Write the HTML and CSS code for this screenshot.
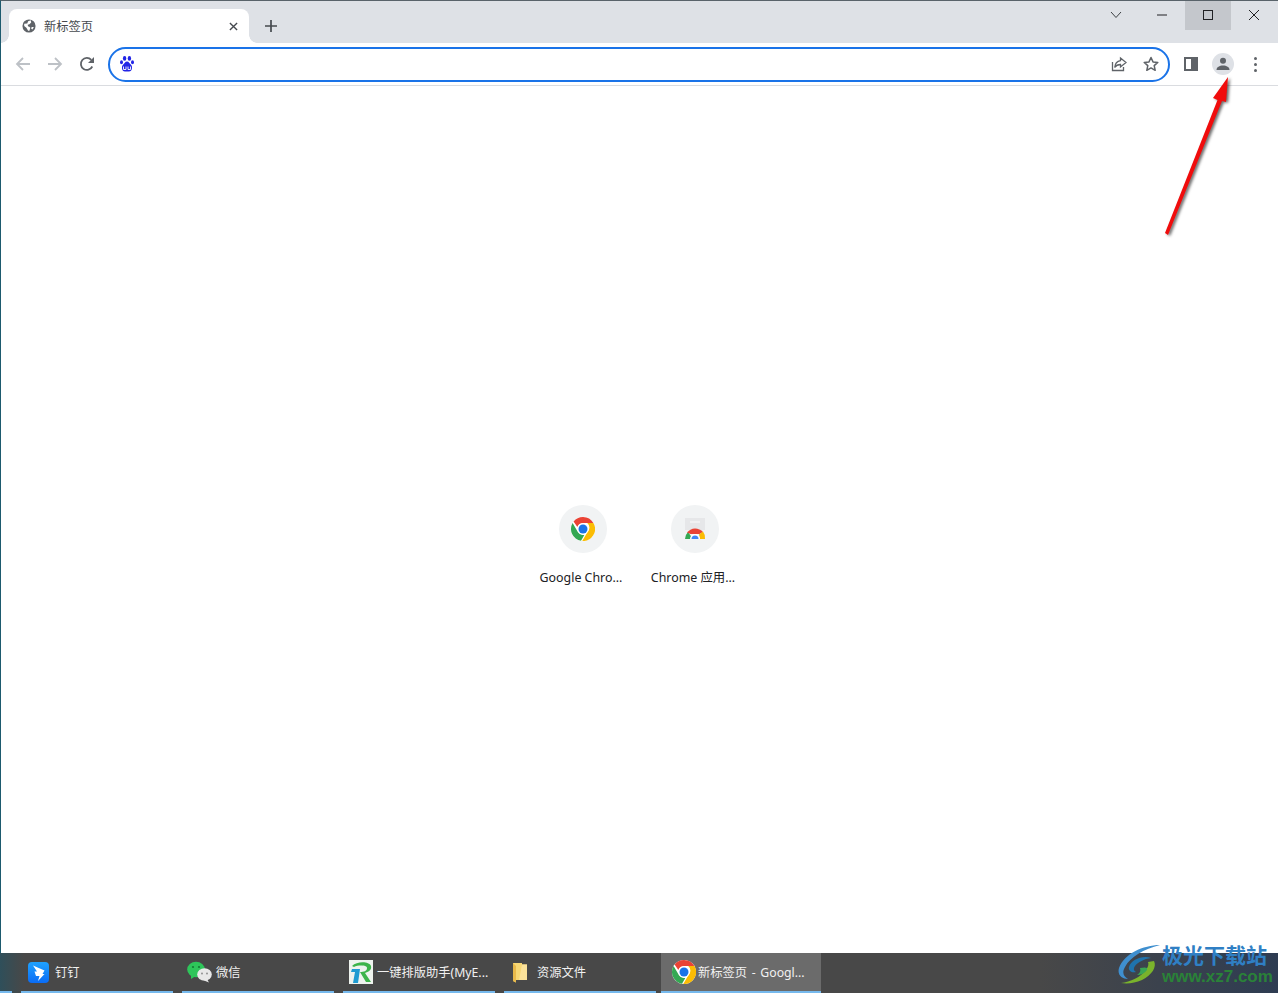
FILE: index.html
```html
<!DOCTYPE html>
<html lang="zh">
<head>
<meta charset="utf-8">
<title>新标签页</title>
<link rel="stylesheet" href="styles.css">
</head>
<body>
<svg width="0" height="0" class="defs">
  <defs>
    <symbol id="chrome" viewBox="0 0 48 48">
      <circle cx="24" cy="24" r="24" fill="#fff"/>
      <path d="M24 0a24 24 0 0 1 20.800 12H24a12 12 0 0 0-11.300 8L5.200 9A24 24 0 0 1 24 0z" fill="#ea4335"/>
      <path d="M3.200 12 14 30.500a12 12 0 0 0 12.600 5.400L20 47.700A24 24 0 0 1 3.200 12z" fill="#34a853"/>
      <path d="M44.800 12A24 24 0 0 1 22.500 48L33 30a12 12 0 0 0-.5-18z" fill="#fbbc04"/>
      <circle cx="24" cy="24" r="11.500" fill="#fff"/>
      <circle cx="24" cy="24" r="9" fill="#1a73e8"/>
    </symbol>
  </defs>
</svg>
<div class="window">
  <div class="tabstrip">
    <div class="tab">
      <svg class="tab-fav" viewBox="0 0 16 16"><circle cx="8" cy="8" r="7.500" fill="#5f6368"/><path d="M2.500 5.500 6 5l1-2.500 3-1 .5 2.500-2 2-2 .5.500 2H8l1.500 1.500-1 3.500H7L5 10 2.500 8z" fill="#fff"/><path d="M11 9h2.500l-1.500 3-1.500-1z" fill="#fff"/></svg>
      <span class="tab-title">新标签页</span>
      <svg class="tab-close" viewBox="0 0 10 10"><path d="M1 1l8 8M9 1l-8 8" stroke="#45494e" stroke-width="1.500"/></svg>
    </div>
    <svg class="newtab" viewBox="0 0 12 12"><path d="M6 0v12M0 6h12" stroke="#45494e" stroke-width="1.700"/></svg>
    <div class="caption">
      <button class="cap"><svg viewBox="0 0 12 8" width="12" height="8"><path d="M1 1l5 5.500L11 1" fill="none" stroke="#3c4043" stroke-width="1"/></svg></button>
      <button class="cap"><svg viewBox="0 0 10 10" width="10" height="10"><path d="M0 5h10" stroke="#202124" stroke-width="1"/></svg></button>
      <button class="cap cap-hover"><svg viewBox="0 0 10 10" width="10" height="10"><rect x=".5" y=".5" width="9" height="9" fill="none" stroke="#202124"/></svg></button>
      <button class="cap"><svg viewBox="0 0 10 10" width="10" height="10"><path d="M0 0l10 10M10 0L0 10" stroke="#202124" stroke-width="1"/></svg></button>
    </div>
  </div>
  <div class="toolbar">
    <svg class="nav" viewBox="0 0 16 16"><path d="M15 8H2M8 2 2 8l6 6" fill="none" stroke="#bdc1c6" stroke-width="1.800"/></svg>
    <svg class="nav" viewBox="0 0 16 16"><path d="M1 8h13M8 2l6 6-6 6" fill="none" stroke="#bdc1c6" stroke-width="1.800"/></svg>
    <svg class="nav" viewBox="0 0 16 16"><path d="M13.300 10.500A6 6 0 1 1 12.300 3.800" fill="none" stroke="#5f6368" stroke-width="1.800"/><path d="M15 1v6H9z" fill="#5f6368"/></svg>
    <div class="omnibox">
      <svg class="paw" viewBox="0 0 14 16"><g fill="#2225e6"><ellipse cx="4.600" cy="2.400" rx="1.700" ry="2.300"/><ellipse cx="9.400" cy="2.400" rx="1.700" ry="2.300"/><ellipse cx="1.500" cy="6.300" rx="1.500" ry="2"/><ellipse cx="12.500" cy="6.300" rx="1.500" ry="2"/><path d="M7 5.500c2 0 2.500 2 4 3.200 1.700 1.300 1.500 6.800-2 6.800H5C1.500 15.500 1.300 10 3 8.700 4.500 7.500 5 5.500 7 5.500z"/></g><path d="M3.500 10.500v3h2.500v-3M8 10.500v3h2.500v-3" fill="none" stroke="#fff" stroke-width=".9"/></svg>
      <div class="omni-actions">
        <svg class="omni-ic" viewBox="0 0 16 16"><path d="M1.500 6v8.500h11V11" fill="none" stroke="#5f6368" stroke-width="1.300"/><path d="M9.500 2l5.500 4.500-5.500 4.500V8.500C7 8.500 5 9.500 3.700 11.500 4 8 6 5.200 9.500 4.700z" fill="#fff" stroke="#5f6368" stroke-width="1.300"/></svg>
        <svg class="omni-ic" viewBox="0 0 16 16"><path d="M8 1.500l2 4.400 4.800.5-3.600 3.200 1 4.700L8 11.900l-4.200 2.400 1-4.700L1.200 6.400 6 5.900z" fill="#fff" stroke="#5f6368" stroke-width="1.500" stroke-linejoin="round"/></svg>
      </div>
    </div>
    <div class="panel-ic"></div>
    <div class="avatar"><svg viewBox="0 0 14 14" width="14" height="14"><circle cx="7" cy="3.800" r="3" fill="#5f6368"/><path d="M0.500 13c0-3 3-4.500 6.500-4.500s6.500 1.500 6.500 4.500z" fill="#5f6368"/></svg></div>
    <div class="menu"><i></i><i></i><i></i></div>
  </div>
  <main class="ntp">
    <div class="tile">
      <div class="tile-circle"><svg class="tile-ic"><use href="#chrome"/></svg></div>
      <div class="tile-label">Google Chro...</div>
    </div>
    <div class="tile">
      <div class="tile-circle">
        <svg class="tile-ic" viewBox="0 0 24 24">
          <path d="M2 1h20v12H2z" fill="#e6e7e9"/><path d="M7 5h10" stroke="#f4f4f5" stroke-width="1.500"/>
          <path d="M2 22a10 10 0 0 1 3-7l5 7z" fill="#34a853"/>
          <path d="M4 15.500A10.500 10.500 0 0 1 20 15l-3.500 2h-9z" fill="#ea4335"/>
          <path d="M20 14.500a10 10 0 0 1 2 7.500h-5l-1-4.500z" fill="#fbbc04"/>
          <path d="M7 22a5 5 0 0 1 10 0z" fill="#fff"/><path d="M8.500 22a3.500 3.500 0 0 1 7 0z" fill="#4285f4"/>
        </svg>
      </div>
      <div class="tile-label">Chrome 应用...</div>
    </div>
  </main>
</div>
<div class="taskbar">
  <div class="task task-stub"></div>
  <div class="task">
    <svg class="task-ic ding" viewBox="0 0 21 21"><defs><linearGradient id="dg" x1="0" y1="0" x2="0" y2="1"><stop offset="0" stop-color="#1fa2ff"/><stop offset="1" stop-color="#0a6cf5"/></linearGradient></defs><rect width="21" height="21" rx="4" fill="url(#dg)"/><path d="M5 3.500l11.500 5-2 3.500h2l-6.500 7 1.500-5H8L6.500 9.500 9 9.500z" fill="#fff"/></svg>
    <span>钉钉</span>
  </div>
  <div class="task">
    <svg class="task-ic wechat" viewBox="0 0 25 22"><ellipse cx="9" cy="8.500" rx="8.800" ry="7.800" fill="#2ec55a"/><path d="M4 14l0 4 4-2.500z" fill="#2ec55a"/><circle cx="6" cy="6" r="1.100" fill="#157a35"/><circle cx="12" cy="6" r="1.100" fill="#157a35"/><ellipse cx="17.500" cy="13.500" rx="7.300" ry="6.200" fill="#e8e8e8"/><path d="M20 18l2 3.500-5-2z" fill="#e8e8e8"/><circle cx="15" cy="12.500" r=".9" fill="#888"/><circle cx="20" cy="12.500" r=".9" fill="#888"/></svg>
    <span>微信</span>
  </div>
  <div class="task">
    <svg class="task-ic soft" viewBox="0 0 24 24"><rect width="24" height="24" fill="#eef3ee"/><path d="M3 6C8 1 20 1 22 6c1 4-3 6-6 7l6 9h-5l-6-10c4 0 7-1 7-4 0-3-9-3-13-1z" fill="#3cb44a"/><path d="M3 9h8l-2 14H4L6 12H2z" fill="#1f9bd1"/></svg>
    <span>一键排版助手(MyE...</span>
  </div>
  <div class="task">
    <svg class="task-ic folder" viewBox="0 0 14 21"><path d="M0 1l9 0 0 1.500 5 0V18L3 18v2.500L0 19z" fill="#f7d774"/><path d="M9 2.500h5V18H6z" fill="#fbe29a"/><path d="M0 1v18l3 1.500V4z" fill="#e8b94a"/></svg>
    <span>资源文件</span>
  </div>
  <div class="task task-active">
    <svg class="task-ic chrome-task"><use href="#chrome"/></svg>
    <span>新标签页 - Googl...</span>
  </div>
</div>
<svg class="arrow" viewBox="0 0 80 170" width="80" height="170">
  <path d="M4 160 56.500 27 52 25 67 4 65 29 61 28 7 162z" fill="#f00c0c"/>
</svg>
<div class="watermark">
  <svg class="wm-logo" viewBox="0 0 44 42" width="44" height="42"><path d="M42 1C25 1 6 10 1 24c-2 7 3 11 9 11-5-3-6-7-3-12C12 13 26 5 42 1z" fill="#3f8fcf"/><path d="M33 14C24 11 13 16 11 23c-1 4 3 6 7 5-2-1-3-3-1-6 3-4 9-7 16-8z" fill="#1f73ad"/><path d="M36 17c3 6-2 14-12 19-7 3-14 4-21 3 9-1 20-6 25-13 2-3 3-6 2-8z" fill="#7ab32c"/><path d="M22 24c5-1 8-1 7 2-2 3-6 5-10 5 3-2 4-4 3-7z" fill="#3aa655"/></svg>
  <div class="wm-text">
    <div class="wm-cn">极光下载站</div>
    <div class="wm-url">www.xz7.com</div>
  </div>
</div>
</body>
</html>
```

FILE: styles.css
```css
* { box-sizing: border-box; }
html, body { margin: 0; height: 100%; }
body {
  width: 1278px;
  height: 993px;
  display: flex;
  flex-direction: column;
  overflow: hidden;
  position: relative;
  font-family: "Noto Sans", "Noto Sans CJK SC", sans-serif;
  background: #fff;
}
.defs { position: absolute; }
.window {
  flex: 1;
  display: flex;
  flex-direction: column;
  border-top: 1px solid #59636a;
  border-left: 1px solid #1d5a6e;
  min-height: 0;
}
.tabstrip {
  height: 42px;
  background: #dee1e6;
  display: flex;
  align-items: flex-start;
  padding: 0 1px 0 8px;
}
.tab {
  width: 240px;
  height: 34px;
  margin-top: 8px;
  background: #fff;
  border-radius: 8px 8px 0 0;
  display: flex;
  align-items: center;
  padding: 0 9px 0 13px;
  position: relative;
}
.tab::before, .tab::after {
  content: "";
  position: absolute;
  bottom: 0;
  width: 8px;
  height: 8px;
}
.tab::before { left: -8px; background: radial-gradient(circle at 0 0, #dee1e6 7.500px, #fff 8px); }
.tab::after { right: -8px; background: radial-gradient(circle at 100% 0, #dee1e6 7.500px, #fff 8px); }
.tab-fav { width: 14px; height: 14px; flex: none; }
.tab-title { flex: 1; margin: 2px 0 0 8px; font-size: 12.250px; color: #45494e; line-height: 16px; }
.tab-close { width: 9px; height: 9px; flex: none; margin-right: 2px; }
.newtab { width: 12px; height: 12px; margin: 19px 0 0 16px; flex: none; }
.caption { margin-left: auto; display: flex; height: 29px; }
.cap {
  width: 46px;
  height: 29px;
  border: 0;
  background: transparent;
  padding: 0 0 1px;
  display: flex;
  align-items: center;
  justify-content: center;
}
.cap-hover { background: #c4c7cc; }
.toolbar {
  height: 43px;
  background: #fff;
  border-bottom: 1px solid #dadce0;
  display: flex;
  align-items: center;
  padding: 0 0 0 14px;
}
.nav { width: 16px; height: 16px; flex: none; margin-right: 16px; }
.omnibox {
  width: 1062px;
  height: 35px;
  margin-left: -3px;
  border: 2px solid #1a73e8;
  border-radius: 18px;
  display: flex;
  align-items: center;
  padding: 0 9px 0 10px;
}
.paw { width: 14px; height: 16px; }
.omni-actions { margin-left: auto; display: flex; gap: 16px; }
.omni-ic { width: 16px; height: 16px; }
.panel-ic {
  width: 14px;
  height: 14px;
  margin-left: 14px;
  background: #fff;
  border: 2px solid #5f6368;
  border-right-width: 7px;
  flex: none;
}
.avatar {
  width: 22px;
  height: 22px;
  margin-left: 14px;
  border-radius: 50%;
  background: #dee1e6;
  display: flex;
  align-items: center;
  justify-content: center;
  flex: none;
}
.menu {
  margin-left: 20px;
  display: flex;
  flex-direction: column;
  gap: 3px;
}
.menu i { width: 3px; height: 3px; border-radius: 50%; background: #5f6368; display: block; }
.ntp {
  flex: 1;
  background: #fff;
  display: flex;
  justify-content: center;
  padding: 419px 1px 0 0;
}
.tile { width: 112px; display: flex; flex-direction: column; align-items: center; }
.tile-circle {
  width: 48px;
  height: 48px;
  border-radius: 50%;
  background: #f1f3f4;
  display: flex;
  align-items: center;
  justify-content: center;
}
.tile-ic { width: 24px; height: 24px; }
.tile-label {
  margin-top: 16px;
  padding-right: 4px;
  font-size: 12.400px;
  line-height: 18px;
  color: #202124;
  white-space: nowrap;
}
.taskbar {
  height: 40px;
  flex: none;
  background: linear-gradient(90deg, #2f4f5a 0, #484848 24px, #484848 1040px, #2e3c52 100%);
  display: flex;
  gap: 9px;
  color: #f1f1f1;
  font-size: 12.250px;
}
.task {
  width: 152px;
  height: 40px;
  border-bottom: 2px solid #76b9ed;
  display: flex;
  align-items: center;
  padding: 0 0 0 6px;
  gap: 6px;
  white-space: nowrap;
}
.task-stub { width: 12px; padding: 0; }
.task span { line-height: 16px; margin-top: 2px; }
.task-ic { flex: none; }
.ding { width: 21px; height: 21px; margin-left: 1px; }
.wechat { width: 25px; height: 22px; margin-right: -2px; margin-left: -1px; }
.soft { width: 24px; height: 24px; margin-right: -2px; }
.folder { width: 14px; height: 21px; margin: 0 4px 0 3px; }
.task-active { width: 160px; margin-left: -4px; background: #6b6b6b; padding-left: 11px; gap: 2px; word-spacing: 1.500px; }
.chrome-task { width: 24px; height: 24px; }
.arrow {
  position: absolute;
  left: 1161px;
  top: 73px;
  pointer-events: none;
  filter: drop-shadow(2px 1px 1.500px rgba(0, 0, 0, .6));
}
.watermark {
  position: absolute;
  left: 1118px;
  top: 941px;
  display: flex;
  pointer-events: none;
}
.wm-logo { margin-top: 3px; }
.wm-text { display: flex; flex-direction: column; }
.wm-cn { font-family: "Noto Sans CJK SC", sans-serif; font-size: 21px; font-weight: 700; line-height: 26px; color: #2f7fc4; white-space: nowrap; }
.wm-url { font-family: "Liberation Sans", sans-serif; font-size: 17px; font-weight: 700; line-height: 20px; color: #2a8238; white-space: nowrap; }
```
